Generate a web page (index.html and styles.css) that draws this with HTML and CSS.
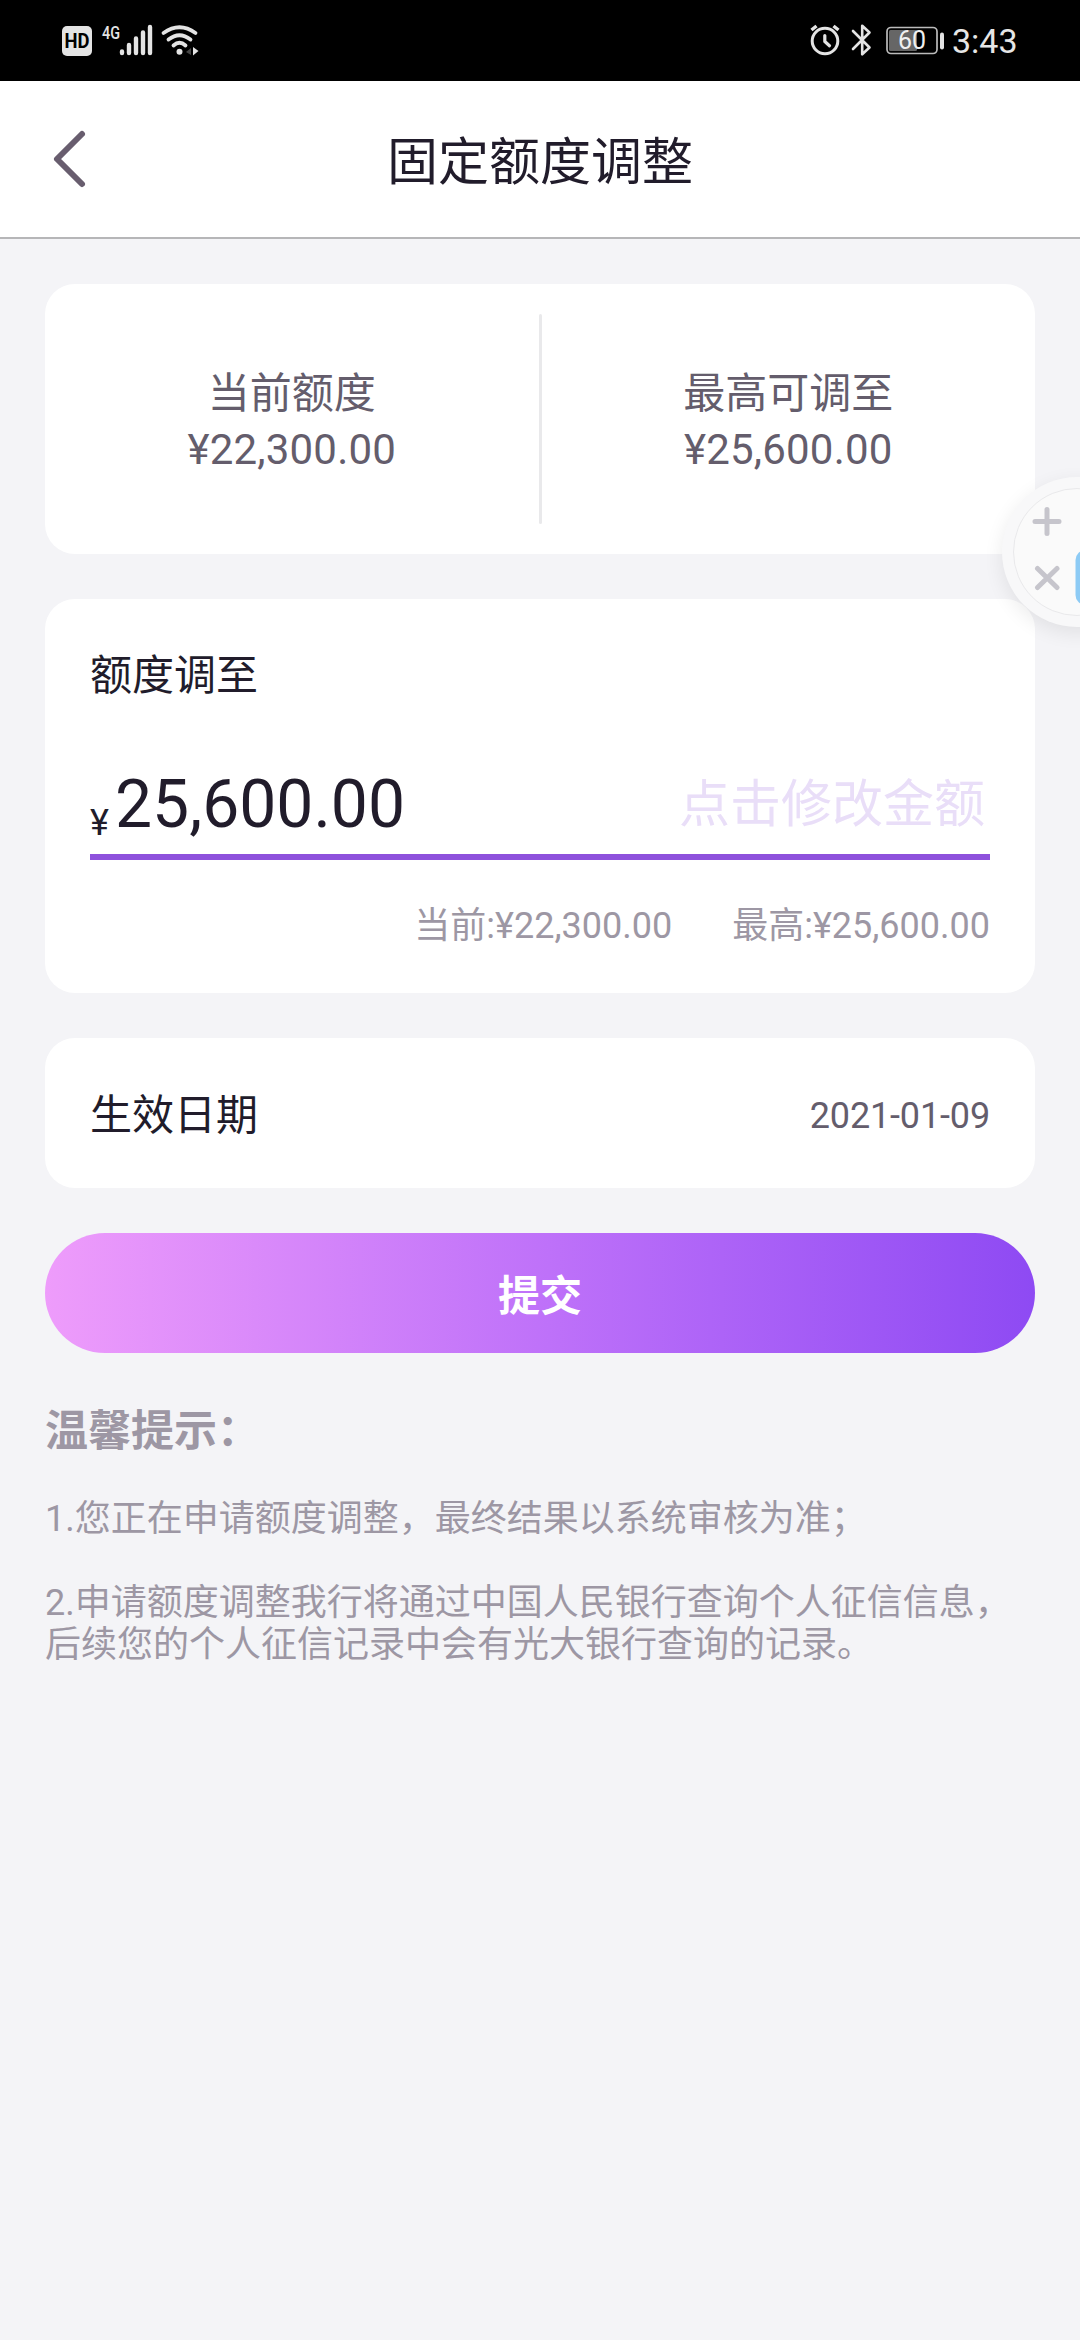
FILE: index.html
```html
<!DOCTYPE html>
<html lang="zh-CN">
<head>
<meta charset="utf-8">
<title>固定额度调整</title>
<link rel="stylesheet" href="styles.css">
</head>
<body>
<div class="status">
  <svg class="status-left" width="140" height="81" viewBox="0 0 140 81">
    <rect x="2" y="26" width="30" height="30" rx="5" fill="#e4e4e4"/>
    <text x="4.5" y="48" class="hd" textLength="25" lengthAdjust="spacingAndGlyphs">HD</text>
    <text x="42" y="38.5" class="net" textLength="18" lengthAdjust="spacingAndGlyphs">4G</text>
    <g stroke="#e4e4e4" stroke-width="4.4" stroke-linecap="round">
      <path d="M62 51.5V53M69 45V53M76 38.500V53M83 32.500V53M90 27V53"/>
    </g>
    <g fill="none" stroke="#e4e4e4" stroke-width="3.800" stroke-linecap="round">
      <path d="M103.500 33Q119.500 21.500 135.500 33"/>
      <path d="M108.500 39.500Q119.500 31 130.500 39.500"/>
      <path d="M113.500 45.500Q119.500 40 125.500 45.500"/>
    </g>
    <circle cx="119.500" cy="51.700" r="3" fill="#e4e4e4"/>
    <path d="M131 47V55M126 52L131 48V55" fill="#444"/>
    <path d="M133 47L138.500 51L133 55.500Z" fill="#e4e4e4"/>
  </svg>
  <div class="status-right">
    <svg width="144" height="81" viewBox="0 0 144 81">
      <g fill="none" stroke="#e4e4e4" stroke-linecap="round" stroke-linejoin="round">
        <circle cx="17" cy="41" r="12.800" stroke-width="3"/>
        <path d="M16.800 35.500V41.500L21.500 45.700" stroke-width="3.200"/>
        <path d="M3.500 30L8.500 26M25.500 26L30.500 30" stroke-width="3.400" stroke-linecap="butt"/>
        <path d="M45 31L61.500 47.500L54.200 54.300V25.700L61.500 32.500L45 49" stroke-width="2.600"/>
        <rect x="79" y="27.500" width="50" height="26" rx="4" stroke="#bbb" stroke-width="1.700"/>
      </g>
      <rect x="81" y="30" width="28" height="21" rx="1.500" fill="#666"/>
      <rect x="132" y="32.500" width="4" height="17" rx="2" fill="#e4e4e4"/>
      <text x="90" y="49" class="battery" textLength="28" lengthAdjust="spacingAndGlyphs">60</text>
    </svg>
    <span class="clock">3:43</span>
  </div>
</div>

<header class="header">
  <svg class="back" width="40" height="66" viewBox="0 0 40 66">
    <path d="M32 8L7 33L32 58" fill="none" stroke="#685d6e" stroke-width="6" stroke-linecap="round" stroke-linejoin="round"/>
  </svg>
  <h1 class="title">固定额度调整</h1>
</header>

<main class="main">
  <section class="card summary">
    <div class="limit"><span>当前额度</span><span class="sum">¥22,300.00</span></div>
    <div class="divider"></div>
    <div class="limit"><span>最高可调至</span><span class="sum">¥25,600.00</span></div>
  </section>

  <section class="card adjust">
    <div class="label">额度调至</div>
    <div class="amount">
      <span class="yen">¥</span><span class="value">25,600.00</span>
      <span class="hint">点击修改金额</span>
    </div>
    <div class="range"><span>当前:¥22,300.00</span><span>最高:¥25,600.00</span></div>
  </section>

  <section class="card effective">
    <span class="label">生效日期</span>
    <span class="date">2021-01-09</span>
  </section>

  <button class="submit">提交</button>

  <section class="tips">
    <h2 class="tips-title">温馨提示：</h2>
    <p class="tip">1.您正在申请额度调整，最终结果以系统审核为准；</p>
    <p class="tip">2.申请额度调整我行将通过中国人民银行查询个人征信信息，<br>后续您的个人征信记录中会有光大银行查询的记录。</p>
  </section>
</main>

<svg class="float" width="120" height="220" viewBox="0 0 120 220">
  <defs>
    <filter id="soft" x="-30%" y="-30%" width="160%" height="160%"><feGaussianBlur stdDeviation="10"/></filter>
  </defs>
  <circle cx="117" cy="118" r="75" fill="#000" opacity=".08" filter="url(#soft)"/>
  <circle cx="117" cy="112" r="75" fill="#f8f8f9"/>
  <circle cx="117" cy="112" r="63.500" fill="#fafafa" stroke="#e9e9eb" stroke-width="1"/>
  <path d="M75 81.500H99M87 69.500V93.500M77.500 128.500L97 147.500M97 128.500L77.500 147.500" stroke="#c6c5cc" stroke-width="5" stroke-linecap="round"/>
  <rect x="115.500" y="110" width="40" height="55" rx="10" fill="#8dcbf5"/>
</svg>
</body>
</html>
```
FILE: styles.css
```css
* { box-sizing: border-box; }

body {
  position: relative;
  margin: 0;
  width: 1080px;
  height: 2340px;
  overflow: hidden;
  background: #f4f4f7;
  color: #211c2b;
  font-family: Roboto, "Noto Sans CJK SC", sans-serif;
}

.status {
  display: flex;
  justify-content: space-between;
  height: 81px;
  padding: 0 63px 0 60px;
  background: #000;
  color: #e6e6e6;
}
.status-right { display: flex; }
.hd { font: 700 20px Roboto, sans-serif; fill: #000; }
.net { font: 500 19px Roboto, sans-serif; fill: #e4e4e4; }
.battery { font: 400 26px Roboto, sans-serif; fill: #f0f0f0; }
.clock {
  width: 65px;
  font-size: 34px;
  line-height: 82px;
  white-space: nowrap;
}

.header {
  display: grid;
  grid-template-columns: 120px 1fr 120px;
  align-items: center;
  height: 158px;
  border-bottom: 2px solid #b6b6b8;
  background: #fff;
}
.back { margin-left: 50px; }
.title {
  margin: 8px 0 0;
  font-size: 51px;
  font-weight: 400;
  line-height: 60px;
  text-align: center;
}

.main {
  display: flex;
  flex-direction: column;
  gap: 45px;
  padding: 45px;
}
.card { border-radius: 30px; background: #fff; }

.summary {
  display: grid;
  grid-template-columns: 1fr 3px 1fr;
  height: 270px;
  padding: 30px 0;
}
.divider { border-radius: 2px; background: #e9e9eb; }
.limit {
  display: flex;
  flex-direction: column;
  justify-content: center;
  padding-top: 5px;
  color: #645d6c;
  font-size: 42px;
  line-height: 56px;
  text-align: center;
}
.sum { letter-spacing: 0.2px; }

.adjust { height: 394px; padding: 47px 45px 0; }
.label { font-size: 42px; line-height: 60px; }
.amount {
  display: flex;
  align-items: baseline;
  height: 110px;
  margin-top: 44px;
  border-bottom: 6px solid #8e51dc;
  line-height: 110px;
}
.yen { position: relative; top: 8px; width: 25px; font-size: 36px; }
.value { font-size: 66px; }
.hint {
  position: relative;
  top: -5px;
  margin: 0 5px 0 auto;
  color: #e9def8;
  font-size: 51px;
}
.range {
  display: flex;
  justify-content: flex-end;
  gap: 60px;
  margin-top: 40px;
  color: #9d97a4;
  font-size: 36px;
  line-height: 52px;
}

.effective {
  display: flex;
  align-items: center;
  justify-content: space-between;
  height: 150px;
  padding: 5px 45px 0;
}
.date { color: #645d6c; font-size: 36px; letter-spacing: -0.15px; }

.submit {
  height: 120px;
  padding: 8px 0 0;
  border: 0;
  border-radius: 60px;
  background: linear-gradient(90deg, #ee9cfb 0%, #bd70f9 52%, #8e4af3 100%);
  color: #fff;
  font: 700 42px/1.2 Roboto, "Noto Sans CJK SC", sans-serif;
}

.tips { color: #9d97a4; }
.tips-title {
  margin: 3px 0 37px;
  font-size: 43px;
  font-weight: 700;
  line-height: 60px;
}
.tip {
  margin: 0 0 42px;
  font-size: 36px;
  line-height: 42px;
  white-space: nowrap;
}

.float { position: absolute; top: 440px; right: 0; }
```
